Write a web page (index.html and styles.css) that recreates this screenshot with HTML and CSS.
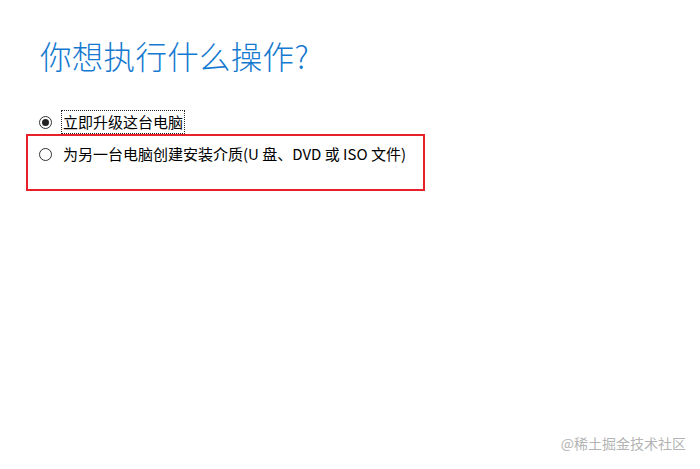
FILE: index.html
```html
<!DOCTYPE html>
<html lang="zh-CN">
<head>
<meta charset="utf-8">
<link rel="stylesheet" href="styles.css">
</head>
<body>
<div class="page">
  <h1 class="title">你想执行什么操作?</h1>
  <div class="options">
    <label class="option">
      <span class="radio checked"></span>
      <span class="label focused">立即升级这台电脑</span>
    </label>
    <label class="option">
      <span class="radio"></span>
      <span class="label">为另一台电脑创建安装介质(U 盘、DVD 或 ISO 文件)</span>
    </label>
  </div>
  <div class="highlight"></div>
  <div class="watermark">@稀土掘金技术社区</div>
</div>
</body>
</html>
```
FILE: styles.css
```css
html, body {
  margin: 0;
  padding: 0;
  background: #fff;
}
.page {
  position: relative;
  width: 700px;
  height: 469px;
  padding: 30px 0 0 40px;
  box-sizing: border-box;
  font-family: "Noto Sans CJK SC", "Noto Sans", sans-serif;
}
.title {
  margin: 0;
  font-size: 31.5px;
  font-weight: 300;
  line-height: 50px;
  color: #1479d0;
  letter-spacing: 0.3px;
}
.options {
  display: flex;
  flex-direction: column;
  gap: 8px;
  margin-top: 30px;
}
.option {
  display: flex;
  align-items: center;
  gap: 9px;
  font-size: 15px;
  color: #000;
  line-height: 20px;
}
.radio {
  width: 13px;
  height: 13px;
  margin-left: -1px;
  border: 1px solid #333;
  border-radius: 50%;
  box-sizing: border-box;
  display: flex;
  align-items: center;
  justify-content: center;
}
.radio.checked::after {
  content: "";
  width: 7px;
  height: 7px;
  border-radius: 50%;
  background: #222;
}
.label {
  padding: 1px 1px;
  border: 1px dotted transparent;
}
.label.focused {
  border-color: #222;
}
.highlight {
  position: absolute;
  left: 26px;
  top: 134px;
  width: 399px;
  height: 57px;
  border: 2px solid #e8202a;
  box-sizing: border-box;
}
.watermark {
  position: absolute;
  right: 14px;
  bottom: 16px;
  font-size: 14px;
  color: #b4b4b4;
}
```
